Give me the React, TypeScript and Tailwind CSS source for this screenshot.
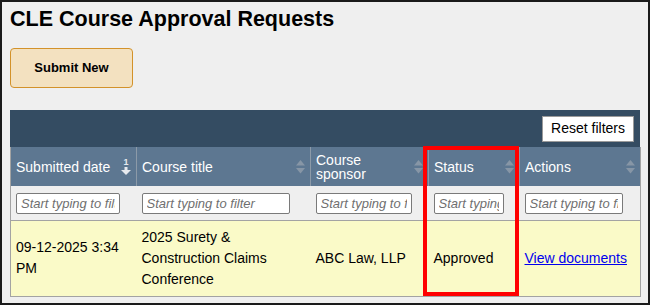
import React from 'react'

const font = { fontFamily: '"Liberation Sans", Arial, sans-serif' }

function SortBoth() {
  return (
    <svg width="9" height="14" viewBox="0 0 9 14" className="shrink-0">
      <path d="M4.5 0 L9 5.5 L0 5.5 Z" fill="#8796a6" />
      <path d="M0 8 L9 8 L4.5 13.5 Z" fill="#8796a6" />
    </svg>
  )
}

function SortDesc() {
  return (
    <div className="flex flex-col items-center shrink-0 leading-none text-[#e6e9ee]">
      <span className="text-[9px] leading-[9px] font-bold">1</span>
      <svg width="10" height="8" viewBox="0 0 10 8">
        <rect x="3.5" y="0" width="3" height="3" fill="#e6e9ee" />
        <path d="M0 3 L10 3 L5 8 Z" fill="#e6e9ee" />
      </svg>
    </div>
  )
}

const cols = [
  { label: 'Submitted date', w: 'w-[126px]', input: 'w-[104px]', active: true },
  { label: 'Course title', w: 'w-[174px]', input: 'w-[148px]' },
  { label: 'Course sponsor', w: 'w-[118px]', input: 'w-[96px]', wrap: true },
  { label: 'Status', w: 'w-[91px]', input: 'w-[70px]' },
  { label: 'Actions', w: 'w-[121px]', input: 'w-[98px]' },
]

export default function App() {
  return (
    <div className="w-[650px] h-[305px] box-border border-2 border-[#1a1a1a] bg-[#efefef] px-[8px] pt-[4px] overflow-hidden" style={font}>
      <h1 className="text-[21.5px] leading-[26px] font-bold text-black">CLE Course Approval Requests</h1>

      <button className="mt-[16px] w-[123px] h-[40px] rounded-[4px] border border-[#d3922a] bg-[#f3e1c0] text-[13px] font-bold text-black">
        Submit New
      </button>

      {/* ── Table ── */}
      <div className="relative mt-[22px] w-[630px]">
        <div className="h-[37px] bg-[#344c62] flex items-center justify-end pr-[6px]">
          <button className="h-[26px] px-[8px] bg-white border border-[#9a9a9a] text-[14px] text-black">Reset filters</button>
        </div>

        <table className="w-[630px] table-fixed border-collapse border border-[#a3a3a3] border-t-0">
          <colgroup>
            {cols.map(c => <col key={c.label} className={c.w} />)}
          </colgroup>
          <thead>
            <tr className="h-[39px] bg-[#5d7791]">
              {cols.map((c, i) => (
                <th key={c.label} className={`px-[5px] text-left font-normal text-white text-[14px] ${i > 0 ? 'border-l border-[#8c9aa8]' : ''}`}>
                  <div className="flex items-center justify-between gap-1">
                    <span className={c.wrap ? 'leading-[14px] w-[60px]' : 'leading-[16px] whitespace-nowrap'}>{c.label}</span>
                    {c.active ? <SortDesc /> : <SortBoth />}
                  </div>
                </th>
              ))}
            </tr>
            <tr className="h-[34px] bg-[#efefef]">
              {cols.map(c => (
                <th key={c.label} className="px-[5px] text-left font-normal">
                  <input
                    placeholder="Start typing to filter"
                    className={`${c.input} h-[21px] box-border bg-white border border-[#7a7a7a] rounded-[2px] px-[4px] text-[13px] italic placeholder:text-[#6f6f6f] outline-none`}
                    style={font}
                  />
                </th>
              ))}
            </tr>
          </thead>
          <tbody>
            <tr className="h-[76px] bg-[#fafac8] border-t border-[#a3a3a3] text-[14px] leading-[21px] text-black">
              <td className="px-[5px] align-middle">09-12-2025 3:34 PM</td>
              <td className="px-[5px] align-middle">2025 Surety &amp; Construction Claims Conference</td>
              <td className="px-[5px] align-middle">ABC Law, LLP</td>
              <td className="px-[5px] align-middle">Approved</td>
              <td className="px-[5px] align-middle whitespace-nowrap">
                <a href="#" className="text-[#0000ee] underline">View documents</a>
              </td>
            </tr>
          </tbody>
        </table>

        {/* highlight annotation */}
        <div className="absolute left-[413px] top-[36px] w-[96px] h-[150px] border-4 border-[#ff0000] pointer-events-none" />
      </div>
    </div>
  )
}
